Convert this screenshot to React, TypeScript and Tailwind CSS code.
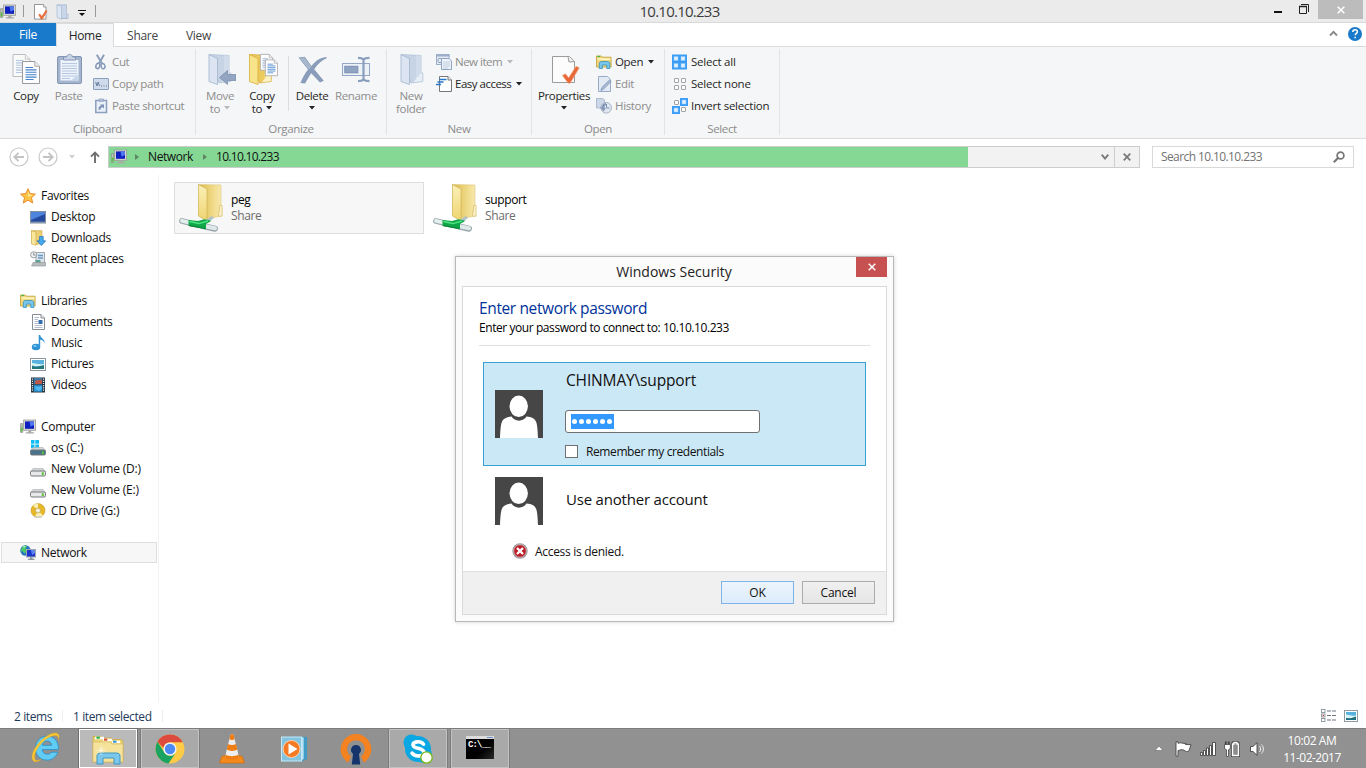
import type { ReactNode } from 'react';

type IconProps = { className?: string };

/* ---------- shared glyphs ---------- */

const Monitor = ({ className = 'w-4 h-4' }: IconProps) => (
  <svg viewBox="0 0 16 16" className={className}>
    <rect x="0.4" y="4.5" width="2.4" height="9" rx="0.4" fill="#b9c0b9" stroke="#7d857d" strokeWidth="0.6" />
    <rect x="0.8" y="8.5" width="1.6" height="4" fill="#55c43a" />
    <rect x="3.6" y="1" width="12" height="10.3" fill="#d6d6d2" stroke="#9c9c98" strokeWidth="0.8" />
    <rect x="5" y="2.4" width="9" height="7.4" fill="#0d1fbe" />
    <path d="M9.5 2.4H14V6L10.5 7.8Z" fill="#4f78f0" />
    <path d="M8.3 11.5h3v1.7h2.6v1.2H5.8v-1.2h2.5z" fill="#a9a9a6" />
  </svg>
);

const Check = () => <path d="M14.5 22.500l3-1.600 3.200 4L28 13.500l3.200 1.200-8.800 14.900c-.6.9-2 .9-2.600 0z" fill="#e8683a" stroke="#f29468" strokeWidth="0.8" />;

const SmallProps = () => (
  <svg viewBox="0 0 16 16" className="h-4 w-4">
    <path d="M1.500.5h9l2.500 2.600v12H1.500z" fill="#fff" stroke="#8a8a8a" strokeWidth="0.9" />
    <path d="M10.500.5v2.600h2.500" fill="#eee" stroke="#8a8a8a" strokeWidth="0.7" />
    <path d="M5.300 10.500l1.700-.8 1.800 2.300 4-6 1.800 1-5 8.200c-.4.600-1.400.6-1.800 0z" fill="#e9703f" />
  </svg>
);

const SmallFolderPale = () => (
  <svg viewBox="0 0 16 16" className="h-4 w-4">
    <path d="M2 .8h9.500v13.400H6z" fill="#c9d6e8" stroke="#a6b9d2" strokeWidth="0.7" />
    <path d="M2 .8l4.500 1.500v13L2 13.500z" fill="#dde7f3" stroke="#a6b9d2" strokeWidth="0.7" />
    <path d="M11.500 10h1.600v4.500H6.500" fill="none" stroke="#a6b9d2" strokeWidth="0.8" />
  </svg>
);

const Caret = ({ className = 'text-[#222]' }: IconProps) => (
  <svg viewBox="0 0 6 4" className={`h-1 w-1.5 shrink-0 ${className}`}>
    <path d="M0 0h6L3 3.500z" fill="currentColor" />
  </svg>
);

const DocPage = ({ x, y, line }: { x: number; y: number; line: string }) => (
  <g transform={`translate(${x} ${y})`}>
    <path d="M.5.5h12.300l4.700 4.700v17.300H.5z" fill="#fdfdfd" stroke="#9a9a9a" />
    <path d="M12.800.5v4.700h4.700" fill="#eee" stroke="#9a9a9a" strokeWidth="0.8" />
    <path d="M3.500 6.500H11M3.500 8.900h11M3.500 11.300h11M3.500 13.700h11M3.500 16.100h11M3.500 18.500h8" stroke={line} strokeWidth="1.100" />
  </g>
);

const CopyIcon = () => (
  <svg viewBox="0 0 32 32" className="h-8 w-8">
    <g opacity="0.6"><DocPage x={2.5} y={1} line="#86a9cf" /></g>
    <DocPage x={12} y={8} line="#4584cf" />
  </svg>
);

const PasteIcon = () => (
  <svg viewBox="0 0 32 32" className="h-8 w-8">
    <rect x="4.500" y="3.500" width="24" height="27" rx="1.500" fill="#a5b5cd" stroke="#8496b5" />
    <rect x="7.500" y="7" width="18" height="20.500" fill="#edf3fb" />
    <path d="M9 10.500h15M9 13h15M9 15.500h15M9 18h15M9 20.500h15M9 23h15M9 25.500h8" stroke="#b6c8df" />
    <path d="M10.500 4h3c.3-3.500 5.700-3.500 6 0h3v3h-12z" fill="#c8d4e6" stroke="#8798b7" />
    <path d="M18 27.500h7.500V21z" fill="#c8d6e9" />
  </svg>
);

const CutIcon = () => (
  <svg viewBox="0 0 16 16" className="h-4 w-4">
    <path d="M3.800.8L9 9.500M11 .8L6 9.500" stroke="#8d9fbd" strokeWidth="2" />
    <ellipse cx="4.800" cy="12" rx="1.900" ry="2.700" fill="none" stroke="#8598b9" strokeWidth="1.500" transform="rotate(15 5 12)" />
    <ellipse cx="10" cy="12" rx="1.900" ry="2.700" fill="none" stroke="#8598b9" strokeWidth="1.500" transform="rotate(-15 10.500 12)" />
  </svg>
);

const PathIcon = () => (
  <svg viewBox="0 0 16 16" className="h-4 w-4">
    <rect x="0.500" y="2.500" width="15" height="11" rx="0.500" fill="#cfdbea" stroke="#8c9fbe" />
    <path d="M2.700 6l1.300 4M5.200 6l1.300 4M4 10l1.200-4" stroke="#5f7498" strokeWidth="0.900" fill="none" />
    <path d="M8 10h1M10.500 10h1M13 10h1" stroke="#5f7498" strokeWidth="1.200" />
  </svg>
);

const ShortcutIcon = () => (
  <svg viewBox="0 0 16 16" className="h-4 w-4">
    <path d="M2.800 2.500h10.700v12H2.800z" fill="#eaf0f8" stroke="#8c9fbf" strokeWidth="1.500" />
    <path d="M6 1h4.500v2.300H6z" fill="#b5c4db" stroke="#8c9fbf" strokeWidth="0.700" />
    <path d="M5.500 11.500c0-2.500 1-3.500 2.700-3.700L7 6.500h4v4L9.700 9.200C8 9.400 7.300 10.300 7.300 12z" fill="#7d92b8" />
  </svg>
);

const OpenFolder = ({ pale = false }: { pale?: boolean }) => (
  <g>
    <path d="M5 1.500l20 1V27l-10 3z" fill={pale ? '#c7d4e5' : '#edca5c'} stroke={pale ? '#afc0d6' : '#d6ab35'} strokeWidth="0.800" />
    <path d="M20 2.200l5 .3V27l-5 1.500z" fill={pale ? '#d6e0ed' : '#f8e59a'} opacity="0.700" />
    <path d="M5 1.500l8.500 4v26L5 28.500z" fill={pale ? '#dbe4f0' : '#f8e48b'} stroke={pale ? '#9fb4cf' : '#d8ae38'} strokeWidth="0.800" />
    <path d="M25 20h1.800v8.500l-10 1.300" fill={pale ? '#e8eef6' : '#fbf1c4'} stroke={pale ? '#b3c3d8' : '#d9b752'} strokeWidth="0.800" />
  </g>
);

const MoveIcon = () => (
  <svg viewBox="0 0 32 32" className="h-8 w-8">
    <OpenFolder pale />
    <path d="M15.500 24.500l8-7v4h8.500v6h-8.500v4z" fill="#93a5c1" stroke="#7388aa" strokeWidth="0.700" />
  </svg>
);

const CopyToIcon = () => (
  <svg viewBox="0 0 32 32" className="h-8 w-8">
    <g transform="translate(-1.500 0)"><OpenFolder /></g>
    <g transform="translate(14 1) scale(.72)"><DocPage x={0} y={0} line="#94add0" /></g>
    <g transform="translate(19 6.500) scale(.72)"><DocPage x={0} y={0} line="#4584cf" /></g>
  </svg>
);

const DeleteIcon = () => (
  <svg viewBox="0 0 32 32" className="h-8 w-8">
    <path d="M2.500 4.500l6.300-.8 6.700 9.300c4.200-5.500 8.300-8.200 14.500-9l1 1c-5.300 2.200-9.200 5.800-12.800 11.200l9.600 11.500-3.800 1.900-8.800-9.300c-2.500 3.800-4.500 7.200-6 10.100l-4.700-.5C6.500 24.500 9 20.500 12 16.500z" fill="#899cba" />
    <path d="M3.500 5l5-.5 7 9.500-2.500 2.500z" fill="#a8b7ce" />
  </svg>
);

const RenameIcon = () => (
  <svg viewBox="0 0 32 32" className="h-8 w-8">
    <rect x="2.500" y="10.500" width="27" height="12" fill="#edf2f8" stroke="#94a8c6" />
    <rect x="4.800" y="13.300" width="13" height="6.500" fill="#8fa3c3" stroke="#7b8fb2" />
    <path d="M18 4.800c3 0 4.500.5 5.500 1.800C24.500 5.300 26 4.800 29.500 4.800M18 28.200c3 0 4.500-.5 5.500-1.800 1 1.300 2.500 1.800 6 1.800M23.500 6v21" fill="none" stroke="#8a9ebe" strokeWidth="2.200" />
  </svg>
);

const NewFolderIcon = () => (
  <svg viewBox="0 0 32 32" className="h-8 w-8"><g transform="translate(1 0)"><OpenFolder pale /></g></svg>
);

const NewItemIcon = () => (
  <svg viewBox="0 0 16 16" className="h-4 w-4">
    <rect x="0.500" y="0.500" width="12.500" height="10" fill="#e3eaf4" stroke="#9caec9" />
    <path d="M0 1.500h13.500" stroke="#9caec9" strokeWidth="2" />
    <circle cx="4" cy="6.500" r="2.200" fill="none" stroke="#8ba0c0" />
    <path d="M5.500 4.500h7.500l2.500 2.500v8.500h-10z" fill="#eef3f9" stroke="#91a5c3" />
    <path d="M7 8h7M7 10h7M7 12h7M7 14h5" stroke="#b4c5dc" strokeWidth="0.800" />
  </svg>
);

const EasyIcon = () => (
  <svg viewBox="0 0 16 16" className="h-4 w-4">
    <path d="M3.500.500h8.500l3.500 3.500v11.500h-12z" fill="#fff" stroke="#777" />
    <path d="M12 .500v3.500h3.500" fill="#eee" stroke="#777" />
    <path d="M3.500 3.500h7M1.500 6h6M0 8.500h5" stroke="#2777cb" strokeWidth="1.300" />
  </svg>
);

const PropertiesIcon = () => (
  <svg viewBox="0 0 32 32" className="h-8 w-8">
    <path d="M4.500 3.500h17l5 5v21h-22z" fill="#fcfcfc" stroke="#9b9b9b" />
    <path d="M20 3.500l1 5.500 5.500-.5" fill="#eee" stroke="#9b9b9b" />
    <Check />
  </svg>
);

const Explorer = () => (
  <svg viewBox="0 0 16 16" className="h-4 w-4">
    <path d="M.5 2h4.800l1 1.200h8.800V13H.5z" fill="#efd77d" stroke="#c5a544" strokeWidth="0.900" />
    <path d="M1.500 2.500H4" stroke="#42b54a" strokeWidth="1.200" />
    <path d="M1.500 5.200h13" stroke="#fff4bc" strokeWidth="1.700" />
    <path d="M3.300 14.500V10c0-1.800 1-2.500 2.500-2.500h5.500c1.500 0 2.500.7 2.500 2.500v4.500h-3V11H6.300v3.500z" fill="#79c8ec" stroke="#318fbe" strokeWidth="0.800" />
  </svg>
);

const EditIcon = () => (
  <svg viewBox="0 0 16 16" className="h-4 w-4">
    <path d="M2.500.5h9l3 3v12h-12z" fill="#e2eaf4" stroke="#97abc8" />
    <path d="M13.500 4l1.600 1.300-7.500 7.800-2.700 1.500.8-2.900z" fill="#a8bad5" stroke="#7c93b8" strokeWidth="0.800" />
  </svg>
);

const HistoryIcon = () => (
  <svg viewBox="0 0 16 16" className="h-4 w-4">
    <path d="M.5.500h6.500l1.500 1.500v8h-8z" fill="#ccd8e8" stroke="#aabbd3" />
    <circle cx="10.200" cy="9.800" r="5.300" fill="#dfe7f1" stroke="#a7b3c4" />
    <path d="M10.500 6v4h3" fill="none" stroke="#7e92b2" />
    <path d="M10 5c-3 .2-4 2-4 4H4l3.500 4.500L10 10H8.500c0-1.500.3-2.500 1.500-3z" fill="#8497b7" />
  </svg>
);

const SelectIcon = ({ on }: { on: boolean[] }) => {
  const full = on.every(Boolean);
  return (
    <svg viewBox="0 0 16 16" className="h-4 w-4">
      {full && <rect width="15" height="15" x="0" y="0.500" fill="#3b9df5" />}
      {on.map((active, i) => {
        const x = i % 2 ? 8 : 0;
        const y = i > 1 ? 8 : 0;
        if (full) {
          return <rect key={i} x={i % 2 ? 9 : 2} y={i > 1 ? 9.500 : 2.500} width="4" height="4" fill="#dff0ff" stroke="#8cc5f8" strokeWidth="0.500" />;
        }
        return active ? (
          <g key={i}>
            <rect x={x} y={y} width="8" height="8" fill="#3b9df5" />
            <rect x={x + 2} y={y + 2} width="4" height="4" fill="#dff0ff" stroke="#8cc5f8" strokeWidth="0.500" />
          </g>
        ) : (
          <rect key={i} x={x ? 9.500 : 2.500} y={y ? 9.500 : 2.500} width="4" height="4" rx="0.500" fill="#fff" stroke="#a2a2a2" />
        );
      })}
    </svg>
  );
};

/* ---------- navigation icons ---------- */

const Star = () => (
  <svg viewBox="0 0 16 16" className="h-4 w-4">
    <path d="M8 .7l2.200 4.900 5.200.5-3.900 3.600 1.200 5.300L8 12.200 3.300 15l1.200-5.300L.6 6.100l5.200-.5z" fill="#fcc344" stroke="#e38226" strokeWidth="0.900" />
    <path d="M8 3l1.500 3.500L13 7l-5 2z" fill="#ffe894" />
  </svg>
);
const Desktop = () => (
  <svg viewBox="0 0 16 16" className="h-4 w-4">
    <rect x="0.500" y="2.500" width="15" height="11.500" fill="#234a9f" stroke="#83909f" />
    <path d="M1 3h14v2L1 11z" fill="#4f84dd" />
    <path d="M1 13.300h14" stroke="#8495ad" strokeWidth="1.400" />
  </svg>
);
const Downloads = () => (
  <svg viewBox="0 0 16 16" className="h-4 w-4">
    <path d="M1.500.7h10.500v13L5 14.500z" fill="#ecd076" stroke="#d1ac49" strokeWidth="0.700" />
    <path d="M1.500.7L6 2v13.300L1.500 14z" fill="#f9e79d" stroke="#d1ac49" strokeWidth="0.700" />
    <path d="M9.500 6.500h3.700v4.300h2.500l-4.300 4.800-4.400-4.800h2.500z" fill="#44a9ee" stroke="#2070b6" strokeWidth="0.700" />
  </svg>
);
const Recent = () => (
  <svg viewBox="0 0 16 16" className="h-4 w-4">
    <rect x="6" y="1.500" width="8.500" height="11" fill="#dfe5e9" stroke="#9ea8b0" />
    <path d="M8 4.500h5M8 7h5" stroke="#669bc9" strokeWidth="1.300" />
    <rect x="5.500" y="9" width="5" height="3" fill="#5ca394" />
    <path d="M3 11.500h12.500v3.500H1.500z" fill="#b8bcbe" stroke="#8c9295" strokeWidth="0.600" />
    <circle cx="3.700" cy="3.800" r="3.100" fill="#f0f0f0" stroke="#97a1a7" />
    <path d="M3.700 1.800v2.300h2" stroke="#667780" fill="none" strokeWidth="0.800" />
  </svg>
);
const Documents = () => (
  <svg viewBox="0 0 16 16" className="h-4 w-4">
    <path d="M2.500.500h8.500l3.500 3.500v11.500h-12z" fill="#fff" stroke="#868e96" />
    <path d="M11 .500v3.500h3.500" fill="#eee" stroke="#868e96" />
    <path d="M4.500 3.500H9M4.500 5.500H8M4.500 7.500H8M4.500 9.500H8M4.500 11.500h8M4.500 13.500h8" stroke="#b2bccd" />
    <rect x="8.500" y="6" width="4" height="4" fill="#336dad" />
  </svg>
);
const Music = () => (
  <svg viewBox="0 0 16 16" className="h-4 w-4">
    <ellipse cx="6" cy="12" rx="4.200" ry="3.300" fill="#2d91d5" />
    <ellipse cx="5" cy="11" rx="2" ry="1.100" fill="#78c2ee" />
    <path d="M8.700 0h1.500c.4 3.500 4.800 3.500 4.500 8.500-.8-2.800-2.500-3.300-4.500-3.700V12H8.700z" fill="#3494d1" />
  </svg>
);
const Pictures = () => (
  <svg viewBox="0 0 16 16" className="h-4 w-4">
    <rect x="0.500" y="2.500" width="15" height="12" fill="#fff" stroke="#8e979e" />
    <rect x="2" y="4" width="12" height="9" fill="#5bb1dd" />
    <path d="M2 7c4 0 6 2 12 1v2H2z" fill="#d4f3f3" />
    <path d="M2 9.500l4 1.500 8-2v4H2z" fill="#24787c" />
  </svg>
);
const Videos = () => (
  <svg viewBox="0 0 16 16" className="h-4 w-4">
    <rect x="1" y="0.500" width="14" height="15" fill="#243039" />
    <rect x="3.700" y="1" width="8.600" height="6.500" fill="#3e78a8" />
    <rect x="3.700" y="8.200" width="8.600" height="6.500" fill="#2c97d5" />
    <path d="M5 5c2-4 4 0 7-3v5H5z" fill="#bb5848" />
    <path d="M5 9l3 1 4-1v2l-3 3-3-2z" fill="#52baf2" />
    <path d="M2.400 1.500v13M13.600 1.500v13" stroke="#e5e8ea" strokeWidth="1.200" strokeDasharray="1.200 1" />
  </svg>
);
const Drive = ({ os = false }: { os?: boolean }) => (
  <svg viewBox="0 0 16 16" className="h-4 w-4">
    {os && (
      <g fill="#12bdf3">
        <rect x="1" y="0" width="3.500" height="3.700" /><rect x="5.300" y="0" width="3.700" height="3.700" />
        <rect x="1" y="4.500" width="3.500" height="3.700" /><rect x="5.300" y="4.500" width="3.700" height="3.700" />
      </g>
    )}
    <path d="M3 7.500h10l2.500 3.500H.500z" fill="#d5d7d7" stroke="#a9acad" strokeWidth="0.600" />
    <rect x="0.500" y="10" width="15" height="5" rx="1.300" fill={os ? '#48718a' : '#e6e8ea'} stroke="#75797c" />
    <rect x="11.800" y="11.300" width="2" height="2.800" fill="#55c536" />
  </svg>
);
const Disc = () => (
  <svg viewBox="0 0 16 16" className="h-4 w-4">
    <circle cx="8" cy="7.500" r="7" fill="#e7b927" stroke="#bf9a36" strokeWidth="0.600" />
    <path d="M8 7.500L3 2.500A7 7 0 018 .5zM8 7.500l5 5a7 7 0 01-8 1.300z" fill="#faf0b6" />
    <circle cx="8" cy="7.500" r="2.600" fill="#eee7c9" stroke="#c4a342" strokeWidth="0.700" />
    <circle cx="8" cy="7.500" r="0.900" fill="#fff" />
    <path d="M4 14h8" stroke="#c5c9ca" strokeWidth="1.200" />
  </svg>
);
const Net = () => (
  <svg viewBox="0 0 16 16" className="h-4 w-4">
    <circle cx="5.500" cy="5.500" r="5.200" fill="#2676c4" />
    <path d="M2 2c2-1.500 4-1.700 5-1L5.500 4 7 6 4.500 8.500 2.500 6 .6 7z" fill="#4cc765" />
    <path d="M3 1.500l3-.5-2 2z" fill="#c1f1ee" />
    <rect x="6.500" y="4.500" width="9" height="7.500" fill="#1b36ca" stroke="#a3a9af" />
    <path d="M11 5h4v3l-3 2z" fill="#5b85f0" />
    <path d="M10 12.300h2.500v1.500h2V15H8v-1.200h2z" fill="#8e989f" />
  </svg>
);

const ShareFolder = () => (
  <svg viewBox="0 0 48 50" className="h-[50px] w-12">
    <defs>
      <linearGradient id="sf" x1="0" x2="1"><stop offset="0" stopColor="#d9b848" /><stop offset=".5" stopColor="#ecd37a" /><stop offset="1" stopColor="#f7e8ad" /></linearGradient>
      <linearGradient id="sf2" x1="0" x2="0" y1="0" y2="1"><stop offset="0" stopColor="#fbf0b8" /><stop offset="1" stopColor="#efd470" /></linearGradient>
    </defs>
    <path d="M20.500 1.500L43 2v31l-15 3z" fill="url(#sf)" stroke="#dec779" strokeWidth="0.600" />
    <path d="M20.500 1.500L29 6v32l-8.500-5z" fill="url(#sf2)" stroke="#cfb255" strokeWidth="0.700" />
    <path d="M41.500 22.500h2.600v10.700h-3.500v-5h.9z" fill="#faf1cb" stroke="#d9bd65" strokeWidth="0.700" />
    <path d="M27 39l8-5" stroke="#b5c2c2" strokeWidth="3" />
    <path d="M4 38l9 2.300" stroke="#98a7ab" strokeWidth="5.800" strokeLinecap="round" />
    <path d="M4 37.800l9 2.200" stroke="#e4eeee" strokeWidth="3.800" strokeLinecap="round" />
    <path d="M27 43.500l10 2.200" stroke="#98a7ab" strokeWidth="6" strokeLinecap="round" />
    <path d="M27 43.300l10 2" stroke="#dfe9e9" strokeWidth="4" strokeLinecap="round" />
    <path d="M10.500 37l9.500 1 6.500-1.800 7 1.500-5.500 3.300v5.200L10.500 43z" fill="#0ea648" />
    <path d="M11.500 38.600l9.500 2 9-2.600" fill="none" stroke="#4ee583" strokeWidth="1.500" />
    <path d="M11 42.500l16 3.200" fill="none" stroke="#0a7d34" strokeWidth="1" />
  </svg>
);

/* ---------- ribbon building blocks ---------- */

type BigProps = { icon: ReactNode; label: string; second?: string; caret?: boolean; disabled?: boolean; width: string };
const BigButton = ({ icon, label, second, caret, disabled, width }: BigProps) => (
  <div className={`flex h-[70px] shrink-0 flex-col items-center pt-1 ${width} ${disabled ? 'text-[#8d8d8d]' : 'text-[#262626]'}`}>
    {icon}
    <div className="mt-1 text-center leading-[13px] whitespace-nowrap">
      {label}
      {second && <br />}
      {second}
      {second && caret && <span className="ml-1 inline-block align-[3px]"><CaretFor disabled={!!disabled} /></span>}
    </div>
    {!second && caret && <span className="mt-1"><CaretFor disabled={!!disabled} /></span>}
  </div>
);
const CaretFor = ({ disabled }: { disabled: boolean }) => <Caret className={disabled ? 'text-[#b9b9b9]' : 'text-[#222]'} />;

const SmallButton = ({ icon, label, caret, disabled, track = '' }: { icon: ReactNode; label: string; caret?: boolean; disabled?: boolean; track?: string }) => (
  <div className={`flex h-[22px] items-center ${disabled ? 'text-[#8d8d8d]' : 'text-[#262626]'}`}>
    {icon}
    <span className={`mb-px ml-[3px] whitespace-nowrap ${track}`}>{label}</span>
    {caret && <span className="mb-px ml-[5px] flex"><CaretFor disabled={!!disabled} /></span>}
  </div>
);

const Group = ({ label, width, children }: { label: string; width: string; children: ReactNode }) => (
  <div className={`flex shrink-0 flex-col border-r border-[#e2e3e4] ${width}`}>
    <div className="flex h-[72px] shrink-0">{children}</div>
    <div className="text-center leading-4 text-[#8b8b8b]">{label}</div>
  </div>
);

const Ribbon = () => (
  <div className="flex h-[92px] shrink-0 border-b border-[#dadbdc] bg-[#f5f6f7] pt-0.5 pb-[3px] text-[11.5px] tracking-[-0.35px]">
    <Group label="Clipboard" width="w-[196px]">
      <BigButton icon={<CopyIcon />} label="Copy" width="ml-[3px] w-[46px]" />
      <BigButton icon={<PasteIcon />} label="Paste" disabled width="w-[39px]" />
      <div className="ml-[5px] flex flex-col pt-0.5">
        <SmallButton icon={<CutIcon />} label="Cut" disabled />
        <SmallButton icon={<PathIcon />} label="Copy path" disabled />
        <SmallButton icon={<ShortcutIcon />} label="Paste shortcut" disabled />
      </div>
    </Group>
    <Group label="Organize" width="w-[191px]">
      <BigButton icon={<MoveIcon />} label="Move" second="to" caret disabled width="ml-1 w-10" />
      <BigButton icon={<CopyToIcon />} label="Copy" second="to" caret width="ml-1 w-9" />
      <div className="mt-[7px] ml-2 h-[55px] w-px shrink-0 bg-[#dcdddf]" />
      <BigButton icon={<DeleteIcon />} label="Delete" caret width="ml-[3px] w-10" />
      <BigButton icon={<RenameIcon />} label="Rename" disabled width="w-12" />
    </Group>
    <Group label="New" width="w-[145px]">
      <BigButton icon={<NewFolderIcon />} label="New" second="folder" disabled width="ml-1 w-10" />
      <div className="ml-[5px] flex flex-col pt-0.5">
        <SmallButton icon={<NewItemIcon />} label="New item" caret disabled track="tracking-[-0.5px]" />
        <SmallButton icon={<EasyIcon />} label="Easy access" caret track="tracking-[-0.5px]" />
      </div>
    </Group>
    <Group label="Open" width="w-[133px]">
      <BigButton icon={<PropertiesIcon />} label="Properties" caret width="ml-1 w-14" />
      <div className="ml-1 flex flex-col pt-0.5">
        <SmallButton icon={<Explorer />} label="Open" caret />
        <SmallButton icon={<EditIcon />} label="Edit" disabled />
        <SmallButton icon={<HistoryIcon />} label="History" disabled />
      </div>
    </Group>
    <Group label="Select" width="w-[115px]">
      <div className="ml-[7px] flex flex-col pt-0.5 tracking-[-0.23px]">
        <SmallButton icon={<SelectIcon on={[true, true, true, true]} />} label="Select all" />
        <SmallButton icon={<SelectIcon on={[false, false, false, false]} />} label="Select none" />
        <SmallButton icon={<SelectIcon on={[false, true, true, false]} />} label="Invert selection" />
      </div>
    </Group>
  </div>
);

const TitleBar = () => (
  <div className="flex h-[23px] shrink-0 border-b border-[#d9d9d9] bg-[#ebebeb]">
    <div className="flex w-[340px] shrink-0 items-start pt-1">
      <Monitor className="h-4 w-4" />
      <div className="ml-[7px] h-3 w-px translate-y-px bg-[#999]" />
      <div className="ml-[9px]"><SmallProps /></div>
      <div className="ml-[6px]"><SmallFolderPale /></div>
      <svg viewBox="0 0 8 7" className="mt-1.5 ml-[7px] h-[7px] w-2"><path d="M0 0h8v1H0zM1 3h6L4 6z" fill="#111" /></svg>
      <div className="ml-[9px] h-3 w-px translate-y-px bg-[#999]" />
    </div>
    <div className="flex flex-1 justify-center pr-6 text-[15px] leading-[23px] tracking-[-0.75px] text-[#3b3b3b]"><span className="pl-[17px]">10.10.10.233</span></div>
    <div className="flex w-[340px] shrink-0 justify-end pr-[3px]">
      <svg viewBox="0 0 8 2" className="mt-[11px] h-0.5 w-2"><path d="M0 0h8v2H0z" fill="#111" /></svg>
      <svg viewBox="0 0 10 10" className="mt-1 mr-[9px] ml-[17px] h-2.5 w-2.5"><path d="M2 .5h7.500V8" fill="none" stroke="#222" /><path d="M.5 3v6.500h7V3" fill="none" stroke="#222" /><path d="M0 2.500h8" stroke="#222" strokeWidth="1.500" /></svg>
      <div className="flex h-[19px] w-[45px] items-center justify-center bg-[#bcbcbc]">
        <svg viewBox="0 0 8 8" className="h-2 w-2"><path d="M.7.7l6.600 6.600M7.300.7L.7 7.300" stroke="#fff" strokeWidth="1.600" /></svg>
      </div>
    </div>
  </div>
);

const Tabs = () => (
  <div className="flex h-6 shrink-0 bg-white leading-6 tracking-[-0.3px] text-[#444]">
    <div className="h-[23px] w-14 bg-[#1979ca] text-center text-white">File</div>
    <div className="w-[58px] border-t border-r border-l border-[#dadbdc] bg-[#f5f6f7] text-center text-[#262626]">Home</div>
    <div className="flex flex-1 items-start border-b border-[#dadbdc]">
      <span className="w-[57px] pt-px text-center">Share</span>
      <span className="w-[55px] pt-px text-center">View</span>
      <span className="flex-1" />
      <svg viewBox="0 0 9 7" className="mt-[7px] h-[7px] w-[9px]"><path d="M1 5.500l3.500-3.700L8 5.500" fill="none" stroke="#8a8a8a" strokeWidth="1.900" /></svg>
      <svg viewBox="0 0 14 14" className="mt-1 mr-1 ml-2.5 h-3.5 w-3.5">
        <circle cx="7" cy="7" r="7" fill="#1979ca" />
        <path d="M4.800 5c0-3 4.600-3 4.600-.3C9.400 6.400 7.200 6.500 7.200 8.300M7.200 9.700v1.600" fill="none" stroke="#fff" strokeWidth="1.500" />
      </svg>
    </div>
  </div>
);

const NavCircle = ({ flip = false }: { flip?: boolean }) => (
  <svg viewBox="0 0 20 20" className={`h-5 w-5 ${flip ? '-scale-x-100' : ''}`}>
    <circle cx="10" cy="10" r="9" fill="#fff" stroke="#c8c8c8" strokeWidth="1.200" />
    <path d="M15 10H5.500M9.500 5.800L5.300 10l4.200 4.200" fill="none" stroke="#c3c3c3" strokeWidth="1.900" />
  </svg>
);

const Crumb = () => (
  <svg viewBox="0 0 4 6" className="h-1.5 w-1"><path d="M0 0l4 3-4 3z" fill="#5c8666" /></svg>
);

const AddressRow = () => (
  <div className="flex h-[36px] shrink-0 items-center bg-white">
    <div className="ml-[9px]"><NavCircle /></div>
    <div className="ml-[9px]"><NavCircle flip /></div>
    <div className="ml-[11px]"><Caret className="text-[#cfcfcf]" /></div>
    <svg viewBox="0 0 10 12" className="ml-[15px] h-3 w-2.5"><path d="M5 12V1.700M1 5.700l4-4 4 4" fill="none" stroke="#6e6e6e" strokeWidth="1.900" /></svg>
    <div className="ml-2 flex h-[22px] w-[1032px] border border-[#cdcdcd] bg-[#f2f2f2]">
      <div className="flex w-[859px] items-center bg-[#84d894] text-[#111]">
        <div className="ml-0.5"><Monitor /></div>
        <span className="ml-2"><Crumb /></span>
        <span className="ml-[9px] tracking-[-0.4px]">Network</span>
        <span className="ml-[10px]"><Crumb /></span>
        <span className="ml-[9px] tracking-[-0.7px]">10.10.10.233</span>
      </div>
      <div className="flex flex-1 items-center justify-end">
        <svg viewBox="0 0 8 6" className="mr-[5px] h-1.5 w-2"><path d="M.7.7L4 4.500 7.300.7" fill="none" stroke="#777" strokeWidth="1.900" /></svg>
        <div className="flex h-5 w-[25px] items-center justify-center border-l border-[#cdcdcd]">
          <svg viewBox="0 0 8 8" className="h-2 w-2"><path d="M.7.7l6.600 6.600M7.300.7L.7 7.300" stroke="#777" strokeWidth="1.700" /></svg>
        </div>
      </div>
    </div>
    <div className="ml-3 flex h-[22px] w-[202px] items-center justify-between border border-[#d9d9d9] pr-2 pl-2 text-[#737373]">
      <span className="tracking-[-0.6px]">Search 10.10.10.233</span>
      <svg viewBox="0 0 12 12" className="h-3 w-3"><circle cx="7.500" cy="4.500" r="3.400" fill="none" stroke="#777" strokeWidth="1.700" /><path d="M5 7L.8 11.200" stroke="#777" strokeWidth="2.200" /></svg>
    </div>
  </div>
);

const NavHead = ({ icon, label }: { icon: ReactNode; label: string }) => (
  <div className="flex h-[21px] items-center pl-5">{icon}<span className="ml-[5px]">{label}</span></div>
);
const NavItem = ({ icon, label }: { icon: ReactNode; label: string }) => (
  <div className="flex h-[21px] items-center pl-[30px]">{icon}<span className="ml-[5px] whitespace-nowrap">{label}</span></div>
);

const Sidebar = () => (
  <div className="flex w-[159px] shrink-0 flex-col border-r border-[#f2f2f2] pt-2.5 tracking-[-0.3px] text-[#111]">
    <NavHead icon={<Star />} label="Favorites" />
    <NavItem icon={<Desktop />} label="Desktop" />
    <NavItem icon={<Downloads />} label="Downloads" />
    <NavItem icon={<Recent />} label="Recent places" />
    <div className="h-[21px]" />
    <NavHead icon={<Explorer />} label="Libraries" />
    <NavItem icon={<Documents />} label="Documents" />
    <NavItem icon={<Music />} label="Music" />
    <NavItem icon={<Pictures />} label="Pictures" />
    <NavItem icon={<Videos />} label="Videos" />
    <div className="h-[21px]" />
    <NavHead icon={<Monitor />} label="Computer" />
    <div className="tracking-[-0.2px]">
      <NavItem icon={<Drive os />} label="os (C:)" />
      <NavItem icon={<Drive />} label="New Volume (D:)" />
      <NavItem icon={<Drive />} label="New Volume (E:)" />
      <NavItem icon={<Disc />} label="CD Drive (G:)" />
    </div>
    <div className="h-[21px]" />
    <div className="ml-px flex h-[21px] w-[156px] items-center border border-[#dedede] bg-[#f7f7f7] pl-[18px]">
      <Net /><span className="ml-[5px]">Network</span>
    </div>
  </div>
);

const ShareTile = ({ name, selected }: { name: string; selected?: boolean }) => (
  <div className={`flex h-[52px] w-[250px] border pl-[3px] ${selected ? 'border-[#dedede] bg-[#f7f7f7]' : 'border-transparent'}`}>
    <ShareFolder />
    <div className="ml-[5px] flex flex-col pt-[9px] leading-4 tracking-[-0.4px]">
      <span className="text-black">{name}</span>
      <span className="text-[#6d6d6d]">Share</span>
    </div>
  </div>
);

const StatusBar = () => (
  <div className="flex h-[25px] shrink-0 items-center bg-white text-[#1e395b]">
    <span className="ml-[14px] w-12 pt-0.5 tracking-[-0.4px]">2 items</span>
    <span className="h-3 w-px bg-[#eee]" />
    <span className="ml-2.5 w-[89px] pt-0.5 tracking-[-0.4px] whitespace-nowrap">1 item selected</span>
    <span className="h-3 w-px bg-[#eee]" />
    <span className="flex-1" />
    <svg viewBox="0 0 16 14" className="h-3.5 w-4">
      {[0.5, 5, 9.500].map((y) => (
        <g key={y}>
          <rect x="0.500" y={y} width="3.500" height="3" fill="#fff" stroke="#8a9299" strokeWidth="0.900" />
          <path d={`M6 ${y + 1.500}h4M11 ${y + 1.500}h4`} stroke="#6c7681" />
        </g>
      ))}
      <circle cx="2.300" cy="6.500" r="0.700" fill="#c33" />
    </svg>
    <svg viewBox="0 0 14 12" className="mr-2 ml-[7px] h-3 w-3.5">
      <rect x="0.500" y="0.500" width="13" height="11" fill="#fff" stroke="#909ba4" />
      <rect x="2" y="2" width="10" height="8" fill="#55b1dd" />
      <path d="M2 4.500c4 0 5 2 10 1V8H2z" fill="#d8f3f5" /><path d="M2 8l4 .5 6-2V10H2z" fill="#216e7b" />
    </svg>
  </div>
);

/* ---------- taskbar ---------- */

const IE = () => (
  <svg viewBox="1.500 1 29 29" className="h-[30px] w-[30px]">
    <path d="M27.500 20.500c-1.600 4.400-5.800 7.700-10.500 7.700-6.500 0-11.200-4.800-11.200-11.400C5.800 10 10.500 5 17.200 5c6.800 0 11 4.900 10.800 13H12.300c.3 2.700 2.300 4.500 5 4.500 1.700 0 3-.7 3.900-2zM12.500 13.800H21.500c-.3-2.400-2-4.100-4.400-4.100s-4.200 1.700-4.600 4.100z" fill="#61cdf5" stroke="#288fca" strokeWidth="0.800" />
    <path d="M4.500 29.500C1 27.500 2 20 8 12.800 14 5.500 22 1 26.500 2.200c2.300.6 2.700 3.300 1.500 6.300.2-2.400-.6-3.900-2.700-4-4.800-.2-11 4-15.400 9.500C5.500 19.500 3.500 25 6 28.500c1.600.3 3.500-.2 5.300-1.200-2.500 2.300-5.100 3.100-6.800 2.200z" fill="#f9c833" stroke="#e0a71a" strokeWidth="0.400" />
  </svg>
);
const ExplorerBig = () => (
  <svg viewBox="0 0 32 32" className="h-8 w-8">
    <path d="M1 7V3.500h8L11 5h8l1.500 1.500h9L31 9v20H1z" fill="#ecd475" stroke="#cbaa49" strokeWidth="0.800" />
    <path d="M3 5h9M11 7h9M20 9h8" stroke="#fff" strokeWidth="2.300" />
    <path d="M4.500 4.700h3.300" stroke="#14b63f" strokeWidth="2" /><path d="M12 6.700h3.300" stroke="#db4a30" strokeWidth="2" /><path d="M21 8.700h3.500" stroke="#2693df" strokeWidth="2" />
    <path d="M1 9h17l2 2h11v18H1z" fill="#f5e39b" stroke="#d4b75e" strokeWidth="0.600" />
    <path d="M5 31v-8c0-2 1.500-3 3.500-3h16c2 0 3.500 1 3.500 3v8h-6v-6H11v6z" fill="#7cc8ec" stroke="#3e96c4" />
    <path d="M9 13v9M4.500 17.500h9M6.500 15l5 5M11.500 15l-5 5" stroke="#fff" strokeWidth="0.700" opacity="0.800" />
  </svg>
);
const ChromeIcon = () => (
  <svg viewBox="0 0 30 30" className="h-[30px] w-[30px]">
    <circle cx="15" cy="15" r="14.500" fill="#fdcb45" />
    <path d="M2.400 7.800A14.500 14.500 0 0127.800 8.300H15A6.700 6.700 0 008.400 14z" fill="#dc4b3e" />
    <path d="M2.400 7.800A14.500 14.500 0 0013.500 29.400L20.500 19A6.700 6.700 0 019 17.800z" fill="#1ca261" />
    <circle cx="15" cy="15" r="6.600" fill="#f4f4f4" /><circle cx="15" cy="15" r="5.200" fill="#4c8bf5" />
  </svg>
);
const VLC = () => (
  <svg viewBox="0 0 28 32" className="h-8 w-7">
    <path d="M4 23h20l2.500 7h-25z" fill="#f48a1b" stroke="#cf6b0c" strokeWidth="0.700" />
    <path d="M12.500 1.500c.5-.8 2.500-.8 3 0L21 24c-2 2.500-12 2.500-14 0z" fill="#eee" />
    <path d="M12.500 1.500c.5-.8 2.500-.8 3 0l1.200 4.800c-1.400.9-4 .9-5.400 0zM10 11c2.300 1.400 5.700 1.400 8 0l1.300 5.500c-2.600 1.900-8 1.900-10.600 0zM7.500 21.500c3.500 2.300 9.500 2.300 13 0L21 24.500c-2.500 2.700-11.500 2.700-14 0z" fill="#ee7d13" />
  </svg>
);
const MediaPlayer = () => (
  <svg viewBox="0 0 30 28" className="h-7 w-[30px]">
    <path d="M8 2h18v22l-4 2H4z" fill="#3e9cc5" />
    <path d="M6 2h17v22l-3 2H3z" fill="#b7e2f4" stroke="#4b9fc5" strokeWidth="0.700" />
    <rect x="0.500" y="2" width="20" height="24" fill="#83c4e1" stroke="#c6e9f6" />
    <circle cx="10.500" cy="14" r="8.500" fill="#f57a25" stroke="#ffd4ad" />
    <path d="M7.500 8.500L16.500 14l-9 5.500z" fill="#fff" />
  </svg>
);
const OpenVpn = () => (
  <svg viewBox="0 0 32 32" className="h-8 w-8">
    <path d="M8.300 29.500A15.300 15.300 0 1123.700 29.500L21 23.500A8.900 8.900 0 1011 23.500z" fill="#f58220" />
    <path d="M16 12a5 5 0 013 9l1.200 10.500h-8.400L13 21a5 5 0 013-9z" fill="#14346b" />
  </svg>
);
const Skype = () => (
  <svg viewBox="0 0 32 32" className="h-8 w-8">
    <circle cx="9.500" cy="9.500" r="8" fill="#0aa7e3" /><circle cx="16" cy="16" r="13" fill="#0aa7e3" /><circle cx="22" cy="22" r="8" fill="#0aa7e3" />
    <path d="M21.500 11.200c-2.600-3.500-10.500-3-10.500.7 0 4.300 11 2.500 11 7.500 0 4.300-9 4.800-12 .8" fill="none" stroke="#fff" strokeWidth="3.600" strokeLinecap="round" />
    <circle cx="24.500" cy="24.500" r="5.700" fill="#fff" stroke="#74b71b" strokeWidth="1.300" />
  </svg>
);
const Cmd = () => (
  <div className="mb-[2px] flex h-[25px] w-[30px] flex-col border border-[#aaa] bg-linear-[135deg] from-black from-60% to-[#2a2a2a]">
    <div className="flex h-[3px] shrink-0 justify-end bg-[#dcdcdc]"><span className="mt-px mr-px h-px w-1.5 bg-[#6c94cc]" /></div>
    <span className="mt-px ml-[2px] font-['Liberation_Mono',monospace] text-[9px] leading-[10px] font-bold tracking-[-1px] whitespace-nowrap text-white">C:\__</span>
  </div>
);

const Task = ({ children, state = 'idle', width }: { children: ReactNode; state?: 'idle' | 'open' | 'active'; width: string }) => {
  const look =
    state === 'active'
      ? 'border border-white bg-[#bababa] outline outline-1 outline-[#6f6f6f]'
      : state === 'open'
        ? 'border border-[#c2c2c2] bg-[#a9a9a9] outline outline-1 outline-[#7c7c7c]'
        : '';
  return <div className={`flex h-[39px] shrink-0 items-center justify-center ${width} ${look}`}>{children}</div>;
};

const Taskbar = () => (
  <div className="flex h-10 shrink-0 border-t border-[#7d7d7d] bg-[#919191]">
    <Task width="ml-[18px] w-14 pb-1"><IE /></Task>
    <Task state="active" width="ml-[5px] w-[58px]"><ExplorerBig /></Task>
    <Task state="open" width="ml-1 w-[58px]"><ChromeIcon /></Task>
    <Task width="ml-1 w-[58px]"><VLC /></Task>
    <Task width="ml-1.5 w-[58px]"><MediaPlayer /></Task>
    <Task width="ml-0.5 w-[58px]"><OpenVpn /></Task>
    <Task state="open" width="ml-1 w-[58px]"><Skype /></Task>
    <Task state="open" width="ml-1 w-[58px]"><Cmd /></Task>
    <div className="flex-1" />
    <div className="flex items-center">
      <svg viewBox="0 0 8 5" className="mr-3 h-[5px] w-2"><path d="M0 4.500L4 0l4 4.500z" fill="#fff" stroke="#555" strokeWidth="0.500" /></svg>
      <svg viewBox="0 0 17 16" className="mr-2 h-4 w-[17px]"><path d="M1 .8h2v1.500c3-1.500 5 .8 8 0l-.5 1.200 5.500.2-2 6c-2 1.500-3.500.7-5-.5-2-1-4-.3-6 .5v5.500H1z" fill="#fff" stroke="#444" strokeWidth="0.900" /></svg>
      <svg viewBox="0 0 16 14" className="mr-2 h-3.5 w-4"><path d="M.5 10.500h2v3h-2zM3.500 8.500h2v5h-2zM6.500 6h2v7.500h-2zM9.500 3.500h2v10h-2zM12.500.5h3v13h-3z" fill="#fff" stroke="#444" strokeWidth="0.900" /></svg>
      <svg viewBox="0 0 16 16" className="mr-2.5 h-4 w-4">
        <path d="M1.800.500v3M4.800.500v3" stroke="#444" strokeWidth="1.800" />
        <path d="M.5 3.500h5.800v4l-1.800 1.300v6.700h-2V8.800L.5 7.500z" fill="#fff" stroke="#444" strokeWidth="0.800" />
        <path d="M8.500 3h1.500V1.500h3V3h1.500v11.500h-6z" fill="none" stroke="#444" strokeWidth="3" />
        <path d="M8.500 3h1.500V1.500h3V3h1.500v11.500h-6z" fill="#8c8c8c" stroke="#fff" strokeWidth="1.400" />
      </svg>
      <svg viewBox="0 0 14 14" className="h-3.5 w-3.5"><path d="M.5 4.500H3L7 .7v12.600L3 9.500H.5z" fill="#fff" stroke="#444" strokeWidth="0.900" /><path d="M9.500 4c1.500 1.500 1.500 4.500 0 6M11.500 2.500c2.500 2.500 2.500 6.500 0 9" fill="none" stroke="#eee" /></svg>
    </div>
    <div className="mr-[22px] ml-[16px] flex w-[64px] flex-col items-center pt-[3px] leading-[17px] tracking-[-0.4px] whitespace-nowrap text-white">
      <span>10:02 AM</span>
      <span className="tracking-[-0.5px]">11-02-2017</span>
    </div>
  </div>
);

/* ---------- credentials dialog ---------- */

const Avatar = () => (
  <svg viewBox="0 0 48 48" className="h-12 w-12 shrink-0">
    <rect width="48" height="48" fill="#464646" />
    <path d="M5 48c.3-7.500.6-11.500 1.500-15 1-4.500 5-6 10-6.500 3 5.500 12 5.500 15 0 5 .5 9 2 10 6.500.9 3.500 1.200 7.500 1.500 15z" fill="#fff" />
    <ellipse cx="23.700" cy="16.500" rx="10.200" ry="12" fill="#464646" />
    <ellipse cx="23.700" cy="16.300" rx="9.200" ry="10.800" fill="#fff" />
  </svg>
);

const Dialog = () => (
  <div className="absolute top-[256px] left-[455px] flex h-[366px] w-[439px] flex-col border border-[#b8b8b8] bg-[#fbfbfb] px-1.5 shadow-[0_0_4px_rgba(0,0,0,0.18)]">
    <div className="flex h-[29px] shrink-0">
      <div className="flex-1 pl-[30px] text-center text-[14px] leading-[29px] tracking-[0.02px] text-[#222]">Windows Security</div>
      <div className="flex h-5 w-[31px] items-center justify-center bg-[#c75050]">
        <svg viewBox="0 0 8 8" className="h-2 w-2"><path d="M.7.7l6.600 6.600M7.300.7L.7 7.300" stroke="#fff" strokeWidth="1.500" /></svg>
      </div>
    </div>
    <div className="flex h-[329px] flex-col border border-[#d9d9d9] bg-white">
      <div className="flex h-[284px] flex-col px-4">
        <div className="mt-[11px] h-[21px] text-[15.5px] leading-5 tracking-[-0.37px] text-[#003399]">Enter network password</div>
        <div className="h-4 leading-[18px] tracking-[-0.43px] text-black">Enter your password to connect to: 10.10.10.233</div>
        <div className="mt-[10px] h-px shrink-0 bg-[#dfdfdf]" />
        <div className="mt-4 ml-1 flex h-[104px] w-[383px] shrink-0 border border-[#3a9fd3] bg-[#cbe8f6] pl-[11px]">
          <div className="pt-[27px]"><Avatar /></div>
          <div className="ml-[22px] flex flex-col">
            <span className="mt-[7px] mb-px pl-px text-[15.5px] leading-5 tracking-[-0.15px] text-[#111]">CHINMAY\support</span>
            <div className="mt-[19px] flex h-[23px] w-[195px] items-center rounded-[3px] border border-[#707070] bg-white pl-[5px]">
              <span className="flex h-[15px] items-center gap-0.5 bg-[#3399ff] pr-0.5 pl-px">
                {[0, 1, 2, 3, 4, 5].map((i) => (
                  <span key={i} className="h-[5px] w-[5px] rounded-full bg-white" />
                ))}
              </span>
            </div>
            <div className="mt-3 flex h-[13px] items-center text-[#111]">
              <span className="h-[13px] w-[13px] border border-[#707070] bg-white" />
              <span className="ml-2 tracking-[-0.4px]">Remember my credentials</span>
            </div>
          </div>
        </div>
        <div className="mt-[11px] flex h-12 shrink-0 items-center pl-4">
          <Avatar />
          <span className="ml-[23px] pb-[5px] text-[15px] text-[#111]">Use another account</span>
        </div>
        <div className="mt-[18px] flex h-4 items-center pl-[33px] text-[#111]">
          <svg viewBox="0 0 16 16" className="h-4 w-4"><circle cx="8" cy="8" r="7.700" fill="#999" /><circle cx="8" cy="8" r="6.300" fill="#bd1f2a" stroke="#ddd" strokeWidth="0.600" /><path d="M5 5l6 6M11 5l-6 6" stroke="#fff" strokeWidth="2.300" /></svg>
          <span className="ml-[7px] pt-0.5 tracking-[-0.3px]">Access is denied.</span>
        </div>
      </div>
      <div className="flex flex-1 justify-end gap-2 border-t border-[#dfdfdf] bg-[#f0f0f0] pt-[9px] pr-[11px] text-[#111]">
        <div className="flex h-[23px] w-[73px] items-center justify-center border border-[#7eb4ea] bg-linear-to-b from-[#ecf4fc] to-[#dcecfc]">OK</div>
        <div className="flex h-[23px] w-[73px] items-center justify-center border border-[#acacac] bg-linear-to-b from-[#f0f0f0] to-[#e5e5e5]">Cancel</div>
      </div>
    </div>
  </div>
);

export default function App() {
  return (
    <div className="relative flex h-[768px] w-[1366px] flex-col overflow-hidden bg-white font-['Open_Sans','Noto_Sans',sans-serif] text-[12px] leading-4 tracking-[-0.2px]">
      <TitleBar />
      <Tabs />
      <Ribbon />
      <AddressRow />
      <div className="flex min-h-0 flex-1">
        <Sidebar />
        <div className="flex gap-1 pt-[7px] pl-[15px]">
          <ShareTile name="peg" selected />
          <ShareTile name="support" />
        </div>
      </div>
      <StatusBar />
      <Taskbar />
      <Dialog />
    </div>
  );
}
